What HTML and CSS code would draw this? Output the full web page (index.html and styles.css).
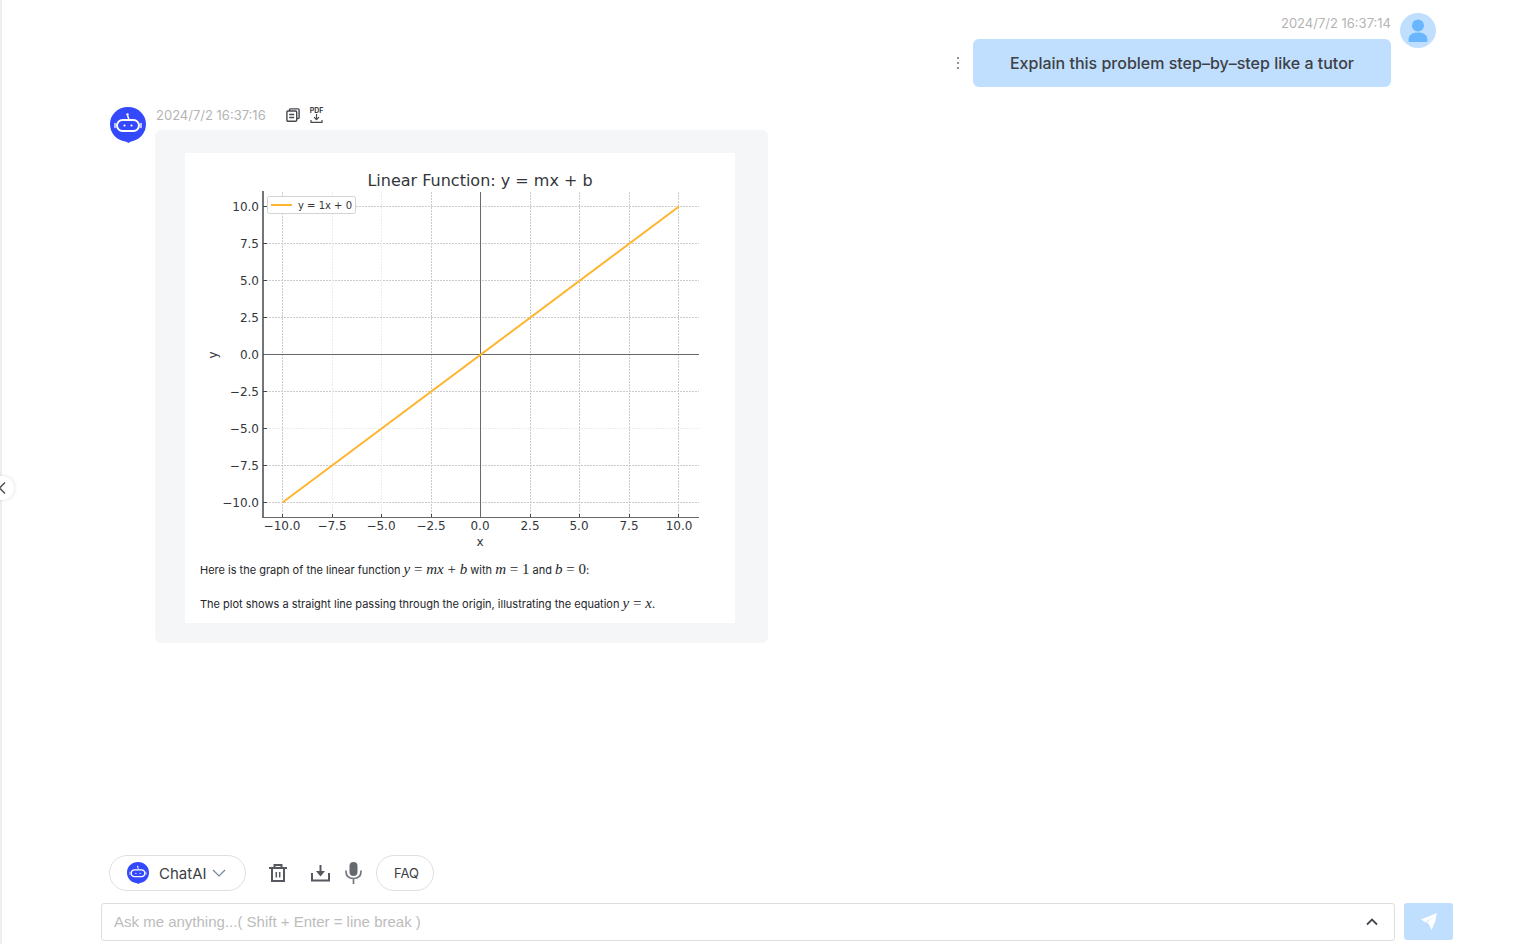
FILE: index.html
```html
<!DOCTYPE html>
<html lang="en">
<head>
<meta charset="utf-8">
<title>ChatAI</title>
<meta name="viewport" content="width=device-width, initial-scale=1">
<link rel="stylesheet" href="styles.css">
</head>
<body>
<svg class="defs" aria-hidden="true">
  <symbol id="bot" viewBox="0 0 36 36">
    <path d="M18 0C28 0 36 7.500 36 17C36 25.500 30.500 32 23 34Q20 34.700 18.500 36Q17 34.700 13 34C5.500 32 0 25.500 0 17C0 7.500 8 0 18 0Z" fill="#3449fb"/>
    <path d="M18.800 12L17.500 8.500" stroke="#fff" stroke-width="1.500"/>
    <circle cx="17.500" cy="7.500" r="1.200" fill="#fff"/>
    <rect x="7" y="13" width="22" height="11" rx="5.500" fill="none" stroke="#fff" stroke-width="2"/>
    <path d="M5 16.500V20.500M31 16.500V20.500" stroke="#dfe3ff" stroke-width="1.600" stroke-linecap="round"/>
    <circle cx="14.500" cy="18.500" r="1.100" fill="#fff"/><circle cx="21.500" cy="18.500" r="1.100" fill="#fff"/>
  </symbol>
</svg>
<div class="app">
  <aside class="rail">
    <button class="rail-toggle" type="button" aria-label="Expand sidebar">
      <svg width="8" height="14" viewBox="0 0 8 14"><path d="M7 1.500L1.500 7L7 12.500" fill="none" stroke="#4b4e54" stroke-width="1.500"/></svg>
    </button>
  </aside>
  <main class="main">
    <section class="chat">
      <article class="message message-user">
        <div class="body">
          <time class="time">2024/7/2 16:37:14</time>
          <div class="bubble-row">
            <button class="more" type="button" aria-label="More">
              <svg width="4" height="14" viewBox="0 0 4 14" fill="#777b82"><circle cx="2" cy="2" r="1.100"/><circle cx="2" cy="7" r="1.100"/><circle cx="2" cy="12" r="1.100"/></svg>
            </button>
            <p class="bubble">Explain this problem step–by–step like a tutor</p>
          </div>
        </div>
        <svg class="avatar" viewBox="0 0 36 35" preserveAspectRatio="none">
          <ellipse cx="18" cy="17.500" rx="18" ry="17.500" fill="#c0dfff"/>
          <circle cx="18" cy="12.500" r="6" fill="#69b6ff"/>
          <path d="M8.500 27.500C8.500 22 12 19.500 18 19.500S27.500 22 27.500 27.500Q27.500 29 26 29H10Q8.500 29 8.500 27.500Z" fill="#69b6ff"/>
        </svg>
      </article>

      <article class="message message-bot">
        <svg class="avatar avatar-bot"><use href="#bot"/></svg>
        <div class="body">
          <header class="meta">
            <time class="time">2024/7/2 16:37:16</time>
            <button class="tool" type="button" aria-label="Copy">
              <svg width="14" height="14" viewBox="0 0 14 14" fill="none" stroke="#45484d" stroke-width="1.400"><path d="M3.500 3V2Q3.500 .9 4.500 .9H12Q13.100 .9 13.100 2V9.500Q13.100 10.500 12 10.500H11"/><rect x=".9" y="3" width="9.800" height="10.200" rx="1"/><path d="M3.200 6.500H8.200M3.200 9.500H8.200"/></svg>
            </button>
            <button class="tool tool-pdf" type="button">
              <span class="pdf">PDF</span>
              <svg width="13" height="9" viewBox="0 0 13 9" fill="none" stroke="#45484d" stroke-width="1.200"><path d="M6.500 0V5.500M4 3.200L6.500 5.700L9 3.200M1 6V8.300H12V6"/></svg>
            </button>
          </header>
          <div class="card">
            <div class="sheet">
              <svg class="chart" viewBox="0 0 550 400" role="img" aria-label="Graph of y = 1x + 0">
                <g class="grid">
                  <path d="M97.500 39V364M246.500 39V364M345.500 39V364M394.500 39V364M444.500 39V364M493.500 39V364"/>
                  <path d="M78 53.500H514M78 90.500H514M78 127.500H514M78 164.500H514M78 238.500H514M78 312.500H514M78 349.500H514"/>
                  <path class="faint" d="M147.500 39V364M196.500 39V364M78 275.500H514"/>
                </g>
                <path class="axis" d="M295.500 39V364M78 201.500H514"/>
                <path class="spine" d="M78 38V364.500"/>
                <path class="axis" d="M77 364.500H514"/>
                <path class="tick" d="M78 53.500H82M78 90.500H82M78 127.500H82M78 164.500H82M78 238.500H82M78 275.500H82M78 312.500H82M78 349.500H82M97.500 364V361M147.500 364V361M196.500 364V361M246.500 364V361M345.500 364V361M394.500 364V361M444.500 364V361M493.500 364V361"/>
                <path class="line" d="M97.500 349.500L494 53.500"/>
                <rect class="legend" x="82.500" y="43.500" width="88" height="17" rx="2"/>
                <path class="line" d="M86 52H107"/>
                <text class="legend-text" x="113" y="56">y = 1x + 0</text>
                <text class="chart-title" x="295" y="33">Linear Function: y = mx + b</text>
                <g class="labels-y">
                  <text x="74" y="58">10.0</text><text x="74" y="95">7.5</text><text x="74" y="132">5.0</text><text x="74" y="169">2.5</text><text x="74" y="206">0.0</text><text x="74" y="243">−2.5</text><text x="74" y="280">−5.0</text><text x="74" y="317">−7.5</text><text x="74" y="354">−10.0</text>
                </g>
                <g class="labels-x">
                  <text x="97" y="377">−10.0</text><text x="147" y="377">−7.5</text><text x="196" y="377">−5.0</text><text x="246" y="377">−2.5</text><text x="295" y="377">0.0</text><text x="345" y="377">2.5</text><text x="394" y="377">5.0</text><text x="444" y="377">7.5</text><text x="494" y="377">10.0</text>
                  <text x="295" y="393">x</text>
                  <text transform="translate(32 202) rotate(-90)">y</text>
                </g>
              </svg>
              <p class="caption">Here is the graph of the linear function <span class="math"><i>y</i> = <i>mx</i> + <i>b</i></span> with <span class="math"><i>m</i> = 1</span> and <span class="math"><i>b</i> = 0</span>:</p>
              <p class="caption">The plot shows a straight line passing through the origin, illustrating the equation <span class="math"><i>y</i> = <i>x</i></span>.</p>
            </div>
          </div>
        </div>
      </article>
    </section>

    <form class="composer">
      <div class="toolbar">
        <button class="pill model" type="button">
          <svg width="22" height="22"><use href="#bot"/></svg>
          <span>ChatAI</span>
          <svg width="14" height="8" viewBox="0 0 14 8"><path d="M1 1L7 7L13 1" fill="none" stroke="#71859b" stroke-width="1.200"/></svg>
        </button>
        <button class="icon trash" type="button" aria-label="Clear">
          <svg width="18" height="18" viewBox="0 0 18 18" fill="none" stroke="#55585e" stroke-width="2"><path d="M0 4H18M5.500 4V1H12.500V4M3 4V17H15V4"/><path d="M7.300 8V13.500M10.700 8V13.500" stroke-width="1.500"/></svg>
        </button>
        <button class="icon" type="button" aria-label="Download">
          <svg width="19" height="17" viewBox="0 0 19 17" fill="none" stroke="#55585e" stroke-width="2"><path d="M1 8V15.500H18V8"/><path d="M9.500 0V9"/><path d="M5 6H14L9.500 11.500Z" fill="#55585e" stroke="none"/></svg>
        </button>
        <button class="icon" type="button" aria-label="Voice">
          <svg width="17" height="22" viewBox="0 0 17 22" fill="none" stroke="#74777c" stroke-width="1.700"><rect x="4.500" y="0" width="8" height="14" rx="4" fill="#66696e" stroke="none"/><path d="M1 8.500V9.500C1 14 4 16.500 8.500 16.500S16 14 16 9.500V8.500M8.500 16.500V22"/></svg>
        </button>
        <button class="pill faq" type="button">FAQ</button>
      </div>
      <div class="entry">
        <div class="field">
          <input class="input" type="text" aria-label="Message" placeholder="Ask me anything...( Shift + Enter = line break )">
          <button class="icon" type="button" aria-label="Expand">
            <svg width="12" height="8" viewBox="0 0 12 8"><path d="M1 6.500L6 1.500L11 6.500" fill="none" stroke="#45484d" stroke-width="1.800"/></svg>
          </button>
        </div>
        <button class="send" type="submit" aria-label="Send">
          <svg width="16" height="17" viewBox="0 0 16 17" fill="#fff"><path d="M16 0L0 6.500L4.500 9.500L12.500 3.500Z"/><path d="M16 0L5.500 10L7.500 10.500L10.500 17L14 9Z"/></svg>
        </button>
      </div>
    </form>
  </main>
</div>
</body>
</html>
```
FILE: styles.css
```css
* { box-sizing: border-box; }
body { margin: 0; background: #fff; color: #3d4045; font-family: Inter, "Liberation Sans", sans-serif; }
p { margin: 0; }
button { margin: 0; padding: 0; border: 0; background: none; color: inherit; font: inherit; }
svg { display: block; flex: none; }
.defs { position: absolute; width: 0; height: 0; }

.app { display: flex; height: 100vh; overflow: hidden; }
.rail { position: relative; flex: none; width: 2px; background: #efefef; }
.rail-toggle { position: absolute; top: 476px; left: -10px; display: flex; align-items: center; justify-content: center; width: 24px; height: 24px; border-radius: 50%; background: #fff; box-shadow: 0 0 4px rgba(0, 0, 0, 0.14); }

.main { display: flex; flex: 1; flex-direction: column; min-width: 0; padding: 13px 83px 3px 99px; }
.chat { display: flex; flex: 1; flex-direction: column; gap: 20px; min-height: 0; padding: 0 17px 0 9px; }

.message { display: flex; gap: 9px; }
.message-user { justify-content: flex-end; }
.avatar { width: 36px; height: 35px; }
.avatar-bot { height: 36px; }
.time { color: #b4b4b4; font-size: 13px; line-height: 16px; }
.message-user .time { display: block; padding: 2px 0 0; margin-bottom: 8px; text-align: right; }
.bubble-row { display: flex; align-items: center; gap: 13px; }
.bubble { padding: 12px 37px; border-radius: 6px; background: #c0dfff; font-size: 16px; font-weight: 500; line-height: 24px; }

.meta { display: flex; align-items: center; height: 16px; margin: 0 0 7px 1px; }
.tool { margin-left: 20px; }
.tool-pdf { display: flex; flex-direction: column; align-items: center; margin-left: 10px; }
.pdf { font-size: 7px; font-weight: 700; line-height: 7px; }
.card { padding: 23px 33px 20px 30px; border-radius: 6px; background: #f4f6f8; }
.sheet { width: 550px; padding-bottom: 10px; background: #fff; }
.caption { padding: 0 15px; color: #24262a; font-size: 11px; line-height: 18px; }
.caption + .caption { margin-top: 16px; }
.chart + .caption { margin-top: 8px; }
.math { font-family: "Liberation Serif", serif; font-size: 15px; line-height: 16px; }

.chart { width: 100%; font-family: "DejaVu Sans", sans-serif; fill: #33363b; }
.grid { fill: none; stroke: #cbcbcb; stroke-dasharray: 2 1; }
.faint { stroke: #ececec; }
.axis { fill: none; stroke: #66696d; }
.spine { fill: none; stroke: #44474b; stroke-width: 1.5px; }
.tick { stroke: #44474b; }
.line { fill: none; stroke: #ffb52e; stroke-width: 2px; }
.legend { fill: #fff; stroke: #d3d3d3; }
.legend-text { font-size: 10px; }
.chart-title { font-size: 16px; text-anchor: middle; }
.labels-y { font-size: 12px; text-anchor: end; }
.labels-x { font-size: 12px; text-anchor: middle; }

.toolbar { display: flex; align-items: center; padding-left: 8px; margin-bottom: 12px; }
.pill { display: flex; align-items: center; justify-content: center; height: 36px; border: 1px solid #dfdfdf; border-radius: 18px; }
.model { gap: 10px; padding: 0 19px 0 17px; font-size: 15px; }
.model span + svg { margin-left: -5px; }
.trash { margin: 0 24px 0 23px; }
.trash + .icon { margin-right: 15px; }
.faq { width: 58px; margin-left: 14px; padding-left: 4px; font-size: 13px; }
.entry { display: flex; gap: 9px; }
.field { display: flex; flex: 1; align-items: center; height: 38px; padding: 0 16px 0 12px; border: 1px solid #dedede; border-radius: 3px; }
.input { flex: 1; min-width: 0; padding: 0; border: 0; outline: 0; background: none; color: inherit; font-family: "Liberation Sans", Arial, sans-serif; font-size: 15px; line-height: 20px; }
.input::placeholder { color: #bcbcbc; opacity: 1; }
.send { display: flex; align-items: center; justify-content: center; width: 49px; height: 37px; border-radius: 3px; background: #c0dfff; }
```
